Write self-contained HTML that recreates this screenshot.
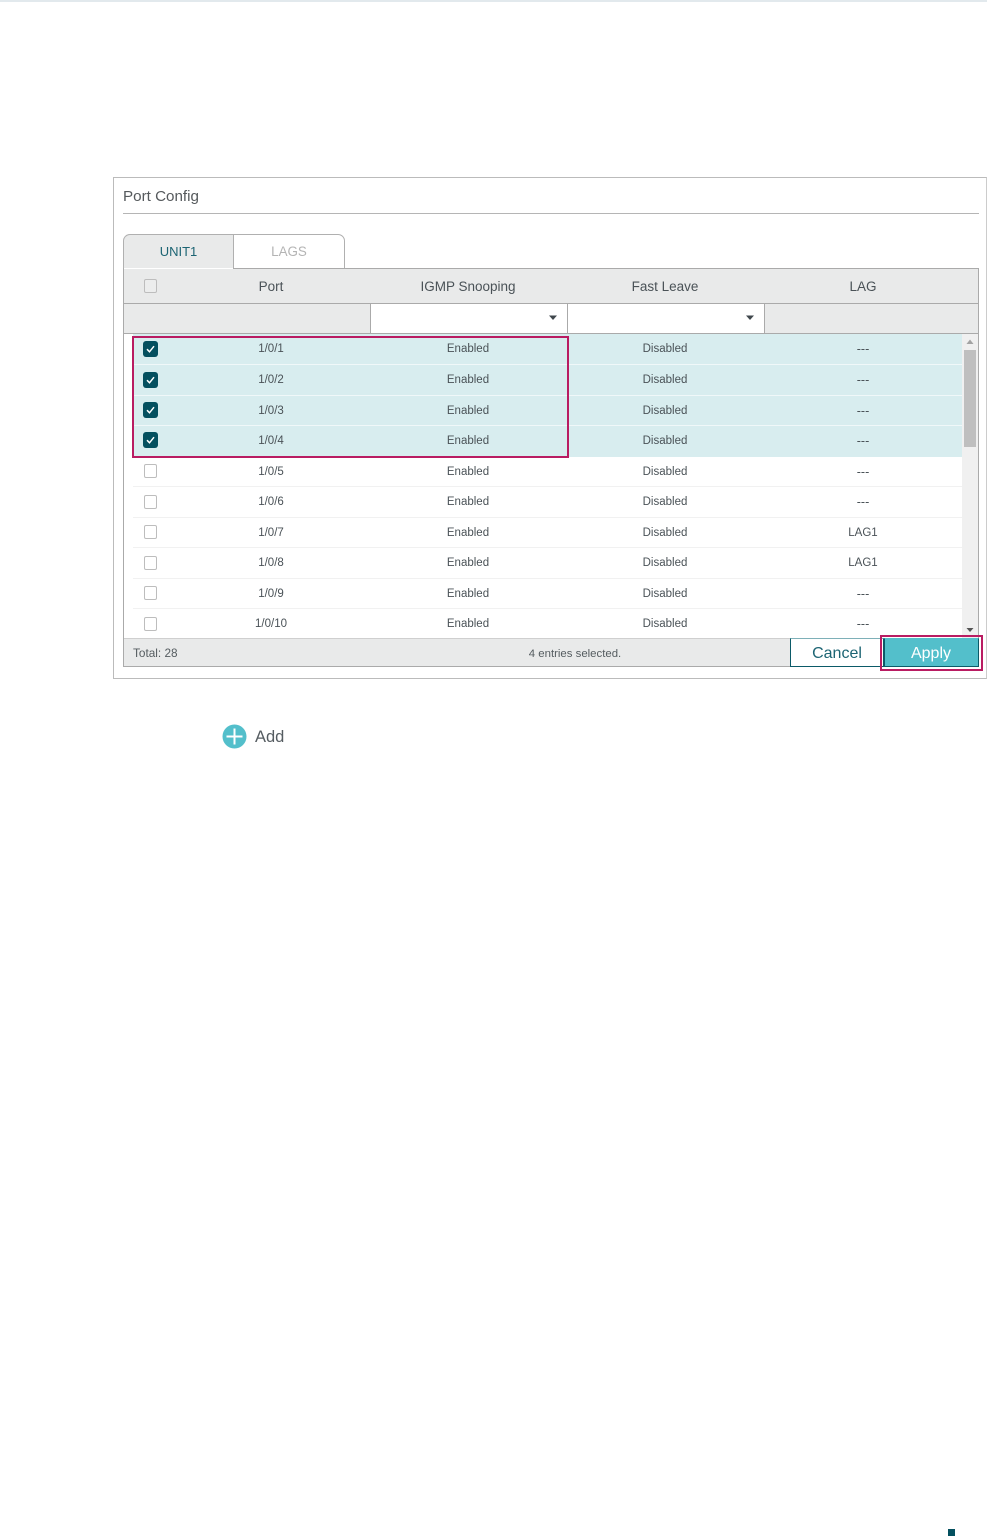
<!DOCTYPE html>
<html>
<head>
<meta charset="utf-8">
<style>
html,body{margin:0;padding:0;background:#fff}
body{position:relative;width:987px;height:1538px;overflow:hidden;font-family:"Liberation Sans",sans-serif;color:#4a5257}
.a{position:absolute;box-sizing:border-box}
.t{position:absolute;white-space:nowrap;transform:translateX(-50%)}
.c{font-size:11.5px;line-height:14px}
.d{font-size:12.5px}
.h{font-size:13.5px;line-height:16px}
.cb{position:absolute;left:144px;width:13px;height:14px;box-sizing:border-box;border:1px solid #bdbdbd;border-radius:2px;background:#fff}
.ck{position:absolute;left:143px;width:15px;height:16px;background:#04505f;border-radius:3px}
</style>
</head>
<body>
<div class="a" style="left:0;top:0;width:987px;height:2px;background:#e2e9ed"></div>

<div class="a" style="left:113px;top:177px;width:874px;height:502px;border:1px solid #bbb;border-right:1px solid #ccc"></div>
<div class="a" style="left:123px;top:188px;font-size:15.2px;line-height:17px;color:#55595c">Port Config</div>
<div class="a" style="left:123px;top:213px;width:856px;height:1px;background:#b5b5b5"></div>

<!-- tabs -->
<div class="a" style="left:123px;top:234px;width:111px;height:36px;background:#e9eaea;border:1px solid #b0b0b0;border-bottom:0;border-radius:7px 0 0 0"></div>
<div class="a" style="left:233px;top:234px;width:112px;height:35px;background:#fff;border:1px solid #b0b0b0;border-radius:0 7px 0 0"></div>
<div class="t" style="left:178.5px;top:244px;font-size:13px;line-height:16px;color:#1c6473">UNIT1</div>
<div class="t" style="left:289px;top:244px;font-size:13.4px;line-height:16px;color:#b4b4b4">LAGS</div>

<!-- table frame -->
<div class="a" style="left:123px;top:268px;width:856px;height:399px;border:1px solid #aaa;border-top:0;background:#fff"></div>
<div class="a" style="left:233px;top:268px;width:746px;height:1px;background:#aaa"></div>
<div class="a" style="left:124px;top:269px;width:854px;height:34px;background:#e9eaea"></div>
<div class="a" style="left:124px;top:303px;width:854px;height:1px;background:#aaa"></div>
<div class="a" style="left:124px;top:304px;width:854px;height:29px;background:#e9eaea"></div>
<div class="a" style="left:124px;top:333px;width:854px;height:1px;background:#aaa"></div>
<div class="a" style="left:370px;top:304px;width:198px;height:29px;background:#fff;border-left:1px solid #aaa;border-right:1px solid #aaa"></div>
<div class="a" style="left:567px;top:304px;width:198px;height:29px;background:#fff;border-left:1px solid #aaa;border-right:1px solid #aaa"></div>
<svg class="a" style="left:548px;top:315px" width="10" height="6"><path d="M1 0.5H9L5 5Z" fill="#3f474c"/></svg>
<svg class="a" style="left:745px;top:315px" width="10" height="6"><path d="M1 0.5H9L5 5Z" fill="#3f474c"/></svg>

<div class="cb" style="top:279px;background:#eceded;border-color:#bdbdbd"></div>
<div class="t h" style="left:271px;top:279px">Port</div>
<div class="t h" style="left:468px;top:279px">IGMP Snooping</div>
<div class="t h" style="left:665px;top:279px">Fast Leave</div>
<div class="t h" style="left:863px;top:279px">LAG</div>

<!-- selected bg -->
<div class="a" style="left:133px;top:334px;width:829px;height:123px;background:#d8edef"></div>
<div class="a" style="left:133px;top:364px;width:829px;height:1px;background:#f0f8f9"></div>
<div class="a" style="left:133px;top:395px;width:829px;height:1px;background:#f0f8f9"></div>
<div class="a" style="left:133px;top:425px;width:829px;height:1px;background:#f0f8f9"></div>
<div class="a" style="left:133px;top:486px;width:829px;height:1px;background:#f1f1f1"></div>
<div class="a" style="left:133px;top:517px;width:829px;height:1px;background:#f1f1f1"></div>
<div class="a" style="left:133px;top:547px;width:829px;height:1px;background:#f1f1f1"></div>
<div class="a" style="left:133px;top:578px;width:829px;height:1px;background:#f1f1f1"></div>
<div class="a" style="left:133px;top:608px;width:829px;height:1px;background:#f1f1f1"></div>

<!-- checkboxes -->
<div class="ck" style="top:341px"><svg width="15" height="16"><path d="M4 8.2L6.5 10.8L11 5.2" fill="none" stroke="#fff" stroke-width="1.5"/></svg></div>
<div class="ck" style="top:372px"><svg width="15" height="16"><path d="M4 8.2L6.5 10.8L11 5.2" fill="none" stroke="#fff" stroke-width="1.5"/></svg></div>
<div class="ck" style="top:402px"><svg width="15" height="16"><path d="M4 8.2L6.5 10.8L11 5.2" fill="none" stroke="#fff" stroke-width="1.5"/></svg></div>
<div class="ck" style="top:432px"><svg width="15" height="16"><path d="M4 8.2L6.5 10.8L11 5.2" fill="none" stroke="#fff" stroke-width="1.5"/></svg></div>
<div class="cb" style="top:464px"></div>
<div class="cb" style="top:495px"></div>
<div class="cb" style="top:525px"></div>
<div class="cb" style="top:556px"></div>
<div class="cb" style="top:586px"></div>
<div class="cb" style="top:617px"></div>

<!-- rows -->
<div class="t c" style="left:271px;top:342px">1/0/1</div><div class="t c" style="left:468px;top:342px">Enabled</div><div class="t c" style="left:665px;top:342px">Disabled</div><div class="t c d" style="left:863px;top:342px">---</div>
<div class="t c" style="left:271px;top:373px">1/0/2</div><div class="t c" style="left:468px;top:373px">Enabled</div><div class="t c" style="left:665px;top:373px">Disabled</div><div class="t c d" style="left:863px;top:373px">---</div>
<div class="t c" style="left:271px;top:404px">1/0/3</div><div class="t c" style="left:468px;top:404px">Enabled</div><div class="t c" style="left:665px;top:404px">Disabled</div><div class="t c d" style="left:863px;top:404px">---</div>
<div class="t c" style="left:271px;top:434px">1/0/4</div><div class="t c" style="left:468px;top:434px">Enabled</div><div class="t c" style="left:665px;top:434px">Disabled</div><div class="t c d" style="left:863px;top:434px">---</div>
<div class="t c" style="left:271px;top:465px">1/0/5</div><div class="t c" style="left:468px;top:465px">Enabled</div><div class="t c" style="left:665px;top:465px">Disabled</div><div class="t c d" style="left:863px;top:465px">---</div>
<div class="t c" style="left:271px;top:495px">1/0/6</div><div class="t c" style="left:468px;top:495px">Enabled</div><div class="t c" style="left:665px;top:495px">Disabled</div><div class="t c d" style="left:863px;top:495px">---</div>
<div class="t c" style="left:271px;top:526px">1/0/7</div><div class="t c" style="left:468px;top:526px">Enabled</div><div class="t c" style="left:665px;top:526px">Disabled</div><div class="t c" style="left:863px;top:526px">LAG1</div>
<div class="t c" style="left:271px;top:556px">1/0/8</div><div class="t c" style="left:468px;top:556px">Enabled</div><div class="t c" style="left:665px;top:556px">Disabled</div><div class="t c" style="left:863px;top:556px">LAG1</div>
<div class="t c" style="left:271px;top:587px">1/0/9</div><div class="t c" style="left:468px;top:587px">Enabled</div><div class="t c" style="left:665px;top:587px">Disabled</div><div class="t c d" style="left:863px;top:587px">---</div>
<div class="t c" style="left:271px;top:617px">1/0/10</div><div class="t c" style="left:468px;top:617px">Enabled</div><div class="t c" style="left:665px;top:617px">Disabled</div><div class="t c d" style="left:863px;top:617px">---</div>

<!-- scrollbar -->
<div class="a" style="left:962px;top:334px;width:16px;height:304px;background:#f0f0f0"></div>
<div class="a" style="left:964px;top:350px;width:12px;height:97px;background:#bfbfbf"></div>
<svg class="a" style="left:966px;top:339px" width="8" height="6"><path d="M4 0.5L7.5 5H0.5Z" fill="#a3a3a3"/></svg>
<svg class="a" style="left:966px;top:627px" width="8" height="6"><path d="M0.5 1H7.5L4 5Z" fill="#555"/></svg>

<!-- footer -->
<div class="a" style="left:124px;top:638px;width:854px;height:1px;background:#cfcfcf"></div>
<div class="a" style="left:124px;top:639px;width:854px;height:27px;background:#e9eaea"></div>
<div class="a" style="left:133px;top:646px;font-size:11.8px;line-height:14px;color:#555c60">Total: 28</div>
<div class="t" style="left:575px;top:647px;font-size:11.4px;line-height:14px;color:#555c60">4 entries selected.</div>
<div class="a" style="left:790px;top:638px;width:94px;height:29px;background:#fff;border:1px solid #0b5a68;border-top-color:#7eb0b8"></div>
<div class="t" style="left:837px;top:645px;font-size:16px;line-height:18px;color:#1c6473">Cancel</div>
<div class="a" style="left:884px;top:638px;width:95px;height:29px;background:#53bfcb;border:1px solid #0b5a68;border-top-color:#53bfcb;border-left-color:#0b5a68"></div>
<div class="t" style="left:931px;top:645px;font-size:16px;line-height:18px;color:#fff">Apply</div>

<!-- highlights -->
<div class="a" style="left:132px;top:336px;width:437px;height:122px;border:2px solid #b91c62"></div>
<div class="a" style="left:880px;top:635px;width:103px;height:36px;border:2px solid #b91c62"></div>

<!-- add -->
<svg class="a" style="left:222px;top:724px" width="25" height="25">
<circle cx="12.5" cy="12.5" r="12" fill="#53bfcb"/>
<path d="M12.5 4.5V20.5M4.5 12.5H20.5" stroke="#fff" stroke-width="2" fill="none"/>
</svg>
<div class="a" style="left:255px;top:728px;font-size:16.5px;line-height:18px;color:#555c61">Add</div>

<div class="a" style="left:948px;top:1529px;width:7px;height:7px;background:#04505f"></div>
</body>
</html>
